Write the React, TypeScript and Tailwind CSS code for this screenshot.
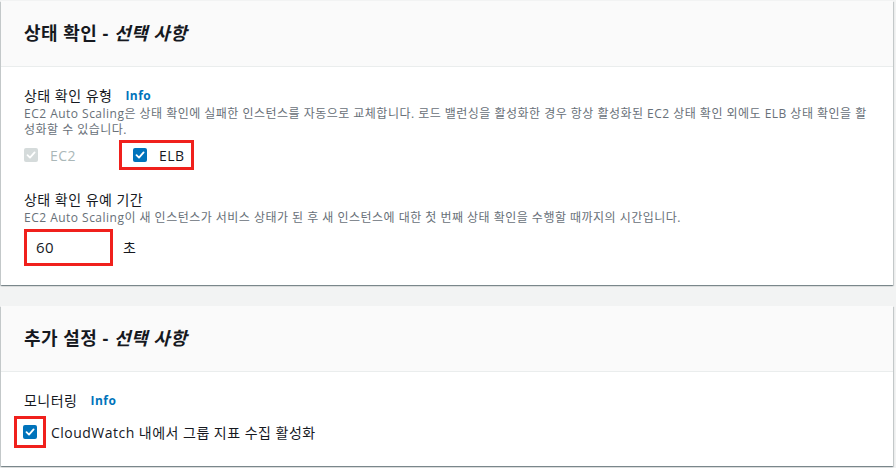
import React from "react";

const FONT = { fontFamily: '"Open Sans", "Noto Sans CJK KR", sans-serif' };

function Check({ disabled = false }: { disabled?: boolean }) {
  return (
    <span
      className={
        "flex h-[14px] w-[14px] shrink-0 items-center justify-center rounded-[2px] " +
        (disabled ? "bg-[#d5dbdb]" : "bg-[#0073bb]")
      }
    >
      <svg width="10" height="10" viewBox="0 0 10 10" fill="none">
        <path d="M1.5 5.2 L4 7.6 L8.6 2.4" stroke="white" strokeWidth="1.8" strokeLinecap="round" strokeLinejoin="round" />
      </svg>
    </span>
  );
}

function Card({ title, pb, children }: { title: string; pb: string; children: React.ReactNode }) {
  return (
    <section className="ml-px mr-[3px] bg-white shadow-[0_1px_1px_0_rgba(0,28,36,0.3),1px_1px_1px_0_rgba(0,28,36,0.15),-1px_1px_1px_0_rgba(0,28,36,0.15)]">
      <header className="flex h-[66px] items-center border-b border-[#eaeded] bg-[#fafafa] px-[23px]">
        <h2 className="text-[18px] font-bold text-[#16191f]">
          {title} - <i>선택 사항</i>
        </h2>
      </header>
      <div className={"px-[23px] pt-[19px] " + pb}>{children}</div>
    </section>
  );
}

function Label({ text, info = false }: { text: string; info?: boolean }) {
  return (
    <div className="flex items-center gap-[13px] text-[14px] leading-[20px] text-[#16191f]">
      <span>{text}</span>
      {info && <span className="text-[12px] font-bold text-[#0073bb]">Info</span>}
    </div>
  );
}

export default function App() {
  return (
    <div className="min-h-[468px] bg-[#f2f3f3] pt-px tracking-[0.03em]" style={FONT}>
      <Card title="상태 확인" pb="pb-[19px]">
        <Label text="상태 확인 유형" info />
        <p className="text-[12px] leading-[16px] text-[#687078]">
          EC2 Auto Scaling은 상태 확인에 실패한 인스턴스를 자동으로 교체합니다. 로드 밸런싱을 활성화한 경우 항상 활성화된 EC2 상태 확인 외에도 ELB 상태 확인을 활성화할 수 있습니다.
        </p>
        <div className="mt-[2px] flex items-center">
          <div className="flex w-[95px] items-center gap-[12px]">
            <Check disabled />
            <span className="text-[14px] text-[#aab7b8]">EC2</span>
          </div>
          <div className="flex h-[30px] items-center gap-[12px] border-[3px] border-[#f0201c] pl-[11px] pr-[6px]">
            <Check />
            <span className="text-[14px] text-[#16191f]">ELB</span>
          </div>
        </div>
        <div className="mt-[20px]">
          <Label text="상태 확인 유예 기간" />
          <p className="text-[12px] leading-[16px] text-[#687078]">
            EC2 Auto Scaling이 새 인스턴스가 서비스 상태가 된 후 새 인스턴스에 대한 첫 번째 상태 확인을 수행할 때까지의 시간입니다.
          </p>
          <div className="mt-[3px] flex items-center gap-[10px]">
            <div className="flex h-[37px] w-[89px] items-center border-[3px] border-[#f0201c] pl-[9px] text-[15px] text-[#16191f]">
              60
            </div>
            <span className="text-[14px] text-[#16191f]">초</span>
          </div>
        </div>
      </Card>
      <div className="h-[21px]" />
      <Card title="추가 설정" pb="pb-[18px]">
        <Label text="모니터링" info />
        <div className="mt-[5px] flex items-center gap-[5px]">
          <div className="-ml-[10px] flex h-[32px] w-[32px] items-center justify-center border-[3px] border-[#f0201c]">
            <Check />
          </div>
          <span className="text-[14px] text-[#16191f]">CloudWatch 내에서 그룹 지표 수집 활성화</span>
        </div>
      </Card>
    </div>
  );
}
